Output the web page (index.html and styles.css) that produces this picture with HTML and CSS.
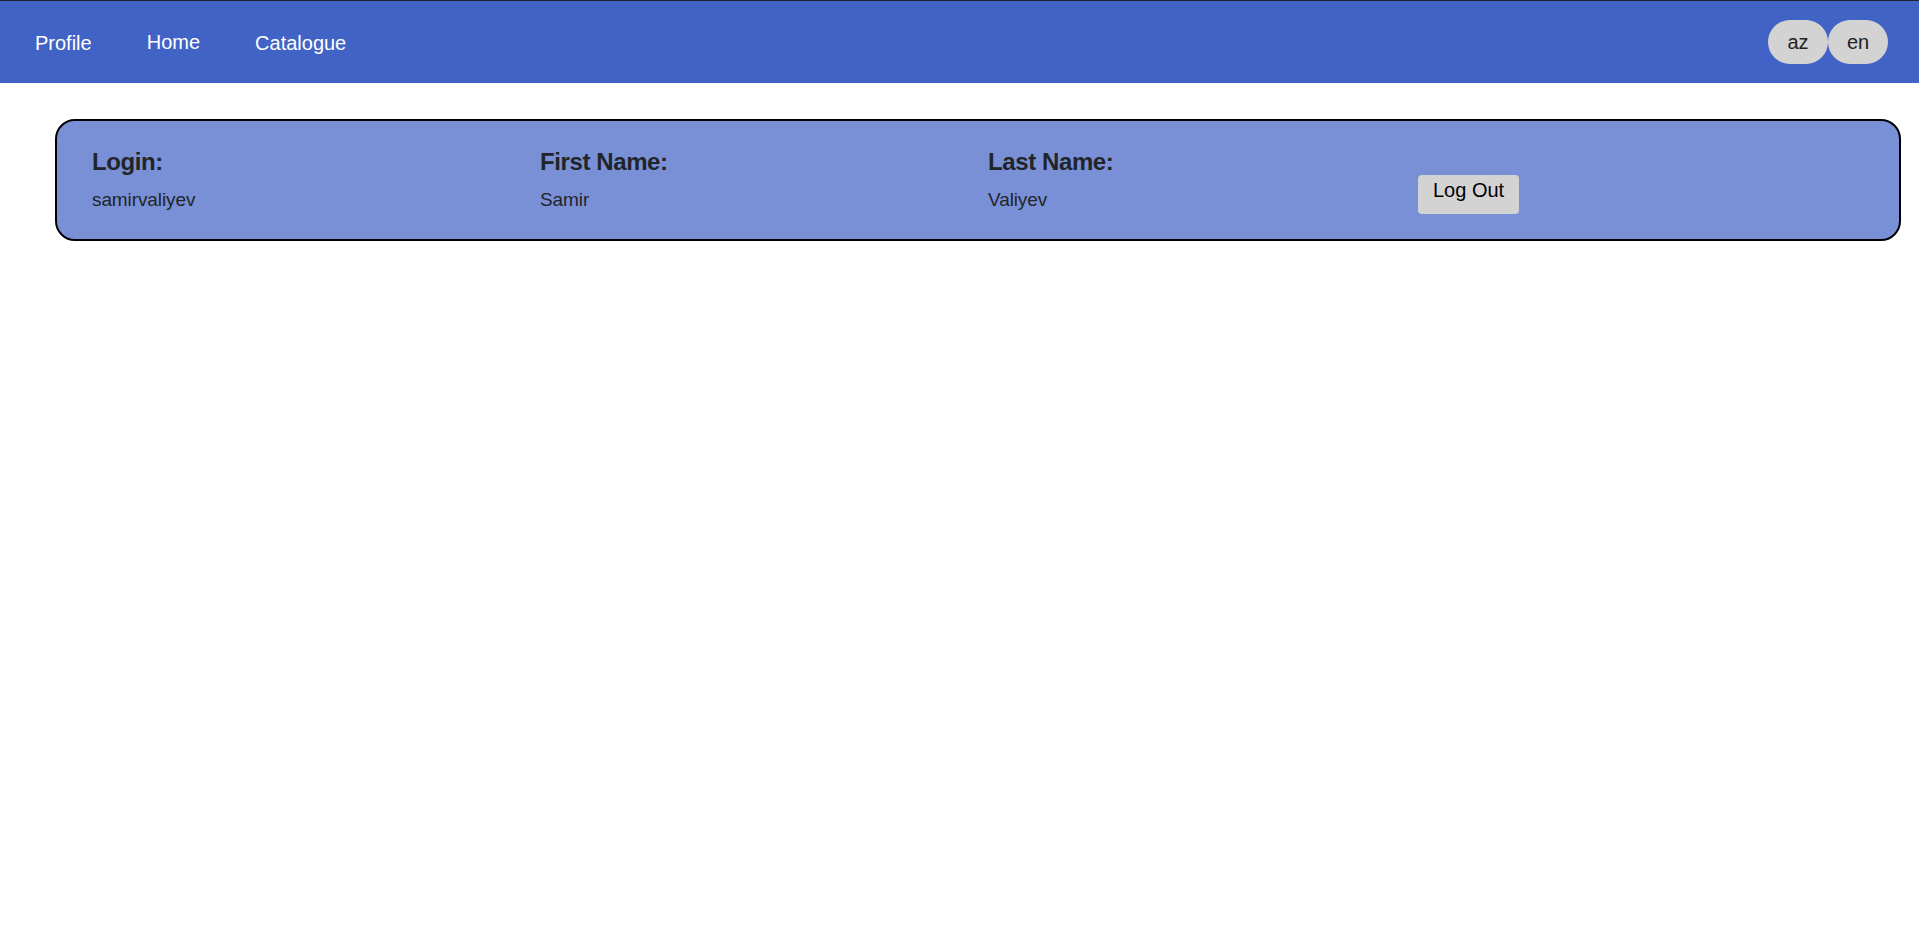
FILE: index.html
```html
<!DOCTYPE html>
<html lang="en">
<head>
<meta charset="utf-8">
<title>Profile</title>
<link rel="stylesheet" href="styles.css">
</head>
<body>
<header class="navbar">
  <nav class="nav-links">
    <a class="nav-link" href="#">Profile</a>
    <a class="nav-link nav-link-home" href="#">Home</a>
    <a class="nav-link" href="#">Catalogue</a>
  </nav>
  <div class="lang-switch">
    <button class="lang-btn">az</button>
    <button class="lang-btn">en</button>
  </div>
</header>
<main class="content">
  <section class="profile-card">
    <div class="field field-login">
      <h3 class="field-label">Login:</h3>
      <p class="field-value">samirvaliyev</p>
    </div>
    <div class="field field-first">
      <h3 class="field-label">First Name:</h3>
      <p class="field-value">Samir</p>
    </div>
    <div class="field field-last">
      <h3 class="field-label">Last Name:</h3>
      <p class="field-value">Valiyev</p>
    </div>
    <div class="field-action">
      <button class="logout-btn">Log Out</button>
    </div>
  </section>
</main>
</body>
</html>
```
FILE: styles.css
```css
html, body {
  margin: 0;
  padding: 0;
  background: #ffffff;
}

body {
  font-family: "Liberation Sans", Arial, sans-serif;
}

.navbar {
  display: flex;
  align-items: center;
  justify-content: space-between;
  height: 82px;
  background: #4263c6;
  border-top: 1px solid #1f2330;
  padding: 0 31px 0 35px;
}

.nav-links {
  display: flex;
  align-items: center;
  gap: 55px;
}

.nav-link {
  color: #ffffff;
  text-decoration: none;
  font-size: 20px;
  line-height: 23px;
  padding-top: 3px;
}

.nav-link-home {
  padding-top: 1px;
}

.lang-switch {
  display: flex;
  align-items: center;
}

.lang-btn {
  width: 60px;
  height: 44px;
  border: none;
  border-radius: 22px;
  background: #d3d3d3;
  color: #222222;
  font-family: "Liberation Sans", Arial, sans-serif;
  font-size: 20px;
  padding: 0;
  cursor: pointer;
}

.content {
  padding: 36px 18px 0 55px;
}

.profile-card {
  display: grid;
  grid-template-columns: 448px 448px 430px auto;
  align-items: start;
  background: #7990d7;
  border: 2px solid #000000;
  border-radius: 20px;
  padding: 27px 35px 25px 35px;
}

.field-label {
  margin: 0;
  font-size: 24px;
  line-height: 28px;
  font-weight: 700;
  color: #212529;
  letter-spacing: -0.4px;
}

.field-value {
  margin: 13px 0 0 0;
  font-size: 19px;
  line-height: 22px;
  color: #212529;
  letter-spacing: -0.1px;
}

.field-action {
  padding-top: 27px;
}

.logout-btn {
  background: #d3d3d3;
  border: none;
  border-radius: 4px;
  color: #000000;
  font-family: "Liberation Sans", Arial, sans-serif;
  font-size: 20px;
  line-height: 23px;
  padding: 4px 15px 12px;
  cursor: pointer;
}
```
